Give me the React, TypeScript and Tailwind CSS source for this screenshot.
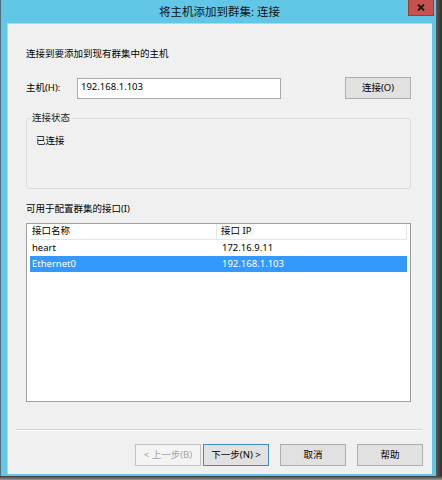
import React from "react";

const font = {
  fontFamily: '"Segoe UI", "Noto Sans", "Noto Sans CJK SC", sans-serif',
};

function Btn({
  children,
  variant = "normal",
}: {
  children: React.ReactNode;
  variant?: "normal" | "disabled" | "focus";
}) {
  const cls =
    variant === "disabled"
      ? "border-[#c4c4c4] bg-[#f4f4f4] text-[#a3a3a3]"
      : variant === "focus"
      ? "border-[#3c8ad2] bg-[#e1e1e1] text-black"
      : "border-[#adadad] bg-[#e1e1e1] text-black";
  return (
    <div
      className={`w-[66px] h-[22px] border flex items-center justify-center text-[9.5px] leading-none ${cls}`}
    >
      {children}
    </div>
  );
}

export default function App() {
  return (
    <div
      className="w-[442px] h-[480px] flex flex-col bg-[#6d6d6d] overflow-hidden"
      style={font}
    >
      <div className="flex h-[476px]">
        {/* window */}
        <div className="w-[436px] h-[476px] flex flex-col bg-[#62c7e7] border-l border-[#4f6f7e]">
          {/* title bar */}
          <div className="h-[23px] flex items-start relative">
            <div className="flex-1 flex justify-center pt-[5px] pl-[2px] text-[11.5px] leading-[14px] text-[#111]">
              将主机添加到群集: 连接
            </div>
            <div className="absolute right-[2px] top-0 w-[26px] h-[16px] bg-[#c7514c] border border-[#9a3b37] border-t-0 flex items-center justify-center">
              <svg width="8" height="7" viewBox="0 0 8 7">
                <path
                  d="M1 0.5 L7 6.5 M7 0.5 L1 6.5"
                  stroke="#1a1a1a"
                  strokeWidth="1.8"
                />
              </svg>
            </div>
          </div>
          {/* client */}
          <div className="flex-1 ml-[6px] mr-[4px] mb-[2px] bg-[#f0f0f0] border-l border-t border-[#9fdcf0] flex flex-col text-[9.5px] text-black">
            <div className="pl-[18px] pr-[21px] flex flex-col">
              <div className="mt-[24px] leading-[12px]">
                连接到要添加到现有群集中的主机
              </div>
              <div className="mt-[17px] flex items-center h-[22px]">
                <div className="w-[51px] leading-[12px]">主机(H):</div>
                <div className="w-[204px] h-[21px] bg-white border border-[#a9a9a9] flex items-center pl-[3px] pb-[2px]">
                  192.168.1.103
                </div>
                <div className="flex-1" />
                <Btn>连接(O)</Btn>
              </div>
              <fieldset className="mt-[13px] h-[77px] border border-[#dcdcdc] rounded-[3px] pl-[9px] pt-[11px] leading-[12px]">
                <legend className="-ml-[5px] px-[1px] text-[#222] leading-[12px]">
                  连接状态
                </legend>
                <div>已连接</div>
              </fieldset>
              <div className="mt-[14px] leading-[12px]">
                可用于配置群集的接口(I)
              </div>
              <div className="mt-[8px] h-[179px] bg-white border border-[#a0a0a0] flex flex-col pl-[3px] pr-[2px]">
                <div className="h-[16px] flex border-b border-[#e5e5e5] mr-[1px]">
                  <div className="w-[187px] border-r border-[#e5e5e5] pl-[2px] flex items-center">
                    接口名称
                  </div>
                  <div className="flex-1 border-r border-[#e5e5e5] pl-[4px] flex items-center">
                    接口 IP
                  </div>
                </div>
                <div className="h-[16px] flex items-center">
                  <div className="w-[187px] pl-[2px]">heart</div>
                  <div className="flex-1 pl-[5px]">172.16.9.11</div>
                </div>
                <div className="h-[16px] flex items-center bg-[#3399ff] text-white mr-[1px]">
                  <div className="w-[187px] pl-[2px]">Ethernet0</div>
                  <div className="flex-1 pl-[5px]">192.168.1.103</div>
                </div>
              </div>
            </div>
            <div className="mt-[27px] ml-[8px] mr-[10px] h-[2px] border-t border-[#d3d3d3] border-b border-b-white" />
            <div className="mt-[13px] flex justify-end pr-[9px]">
              <div className="flex gap-[2px]">
                <Btn variant="disabled">&lt; 上一步(B)</Btn>
                <Btn variant="focus">下一步(N) &gt;</Btn>
              </div>
              <div className="ml-[11px]">
                <Btn>取消</Btn>
              </div>
              <div className="ml-[11px]">
                <Btn>帮助</Btn>
              </div>
            </div>
          </div>
        </div>
        {/* right shadow */}
        <div className="flex-1 bg-gradient-to-r from-[#5a5a5a] to-[#2e2e2e]" />
      </div>
      <div className="flex-1 bg-gradient-to-b from-[#3a3a3a] to-[#9a9a9a]" />
    </div>
  );
}
